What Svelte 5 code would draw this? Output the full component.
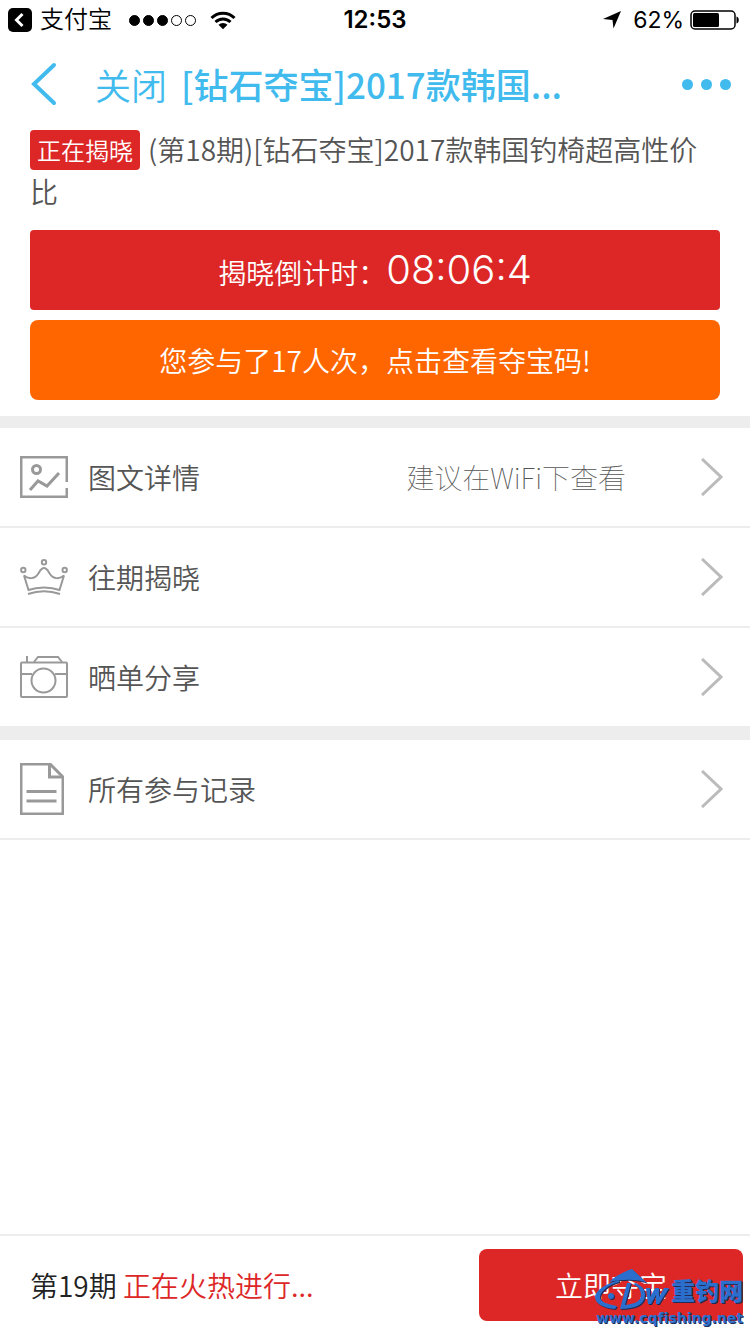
<script>
  let period = 18;
  let joined = 17;
  let countdown = "08:06:4";

  const groups = [
    [
      { icon: "picture", name: "图文详情", tip: "建议在WiFi下查看" },
      { icon: "crown", name: "往期揭晓" },
      { icon: "camera", name: "晒单分享" },
    ],
    [{ icon: "record", name: "所有参与记录" }],
  ];
  const signal = [true, true, true, false, false];
</script>

<div class="page">
  <div class="status">
    <div class="status-left">
      <svg width="24" height="24" viewBox="0 0 24 24">
        <rect width="24" height="24" rx="5" />
        <path d="M14.5 6 8.5 12l6 6" fill="none" stroke="#fff" stroke-width="3" />
      </svg>
      <span class="app-name">支付宝</span>
      <span class="signal">
        {#each signal as on}
          <i class:on></i>
        {/each}
      </span>
      <svg width="26" height="20" viewBox="0 0 26 20">
        <g fill="none" stroke="#000" stroke-width="3">
          <path d="M1.5 8a16.3 16.3 0 0 1 23 0" />
          <path d="M5.5 12a10.6 10.6 0 0 1 15 0" />
        </g>
        <path d="M8.5 14.8a6.4 6.4 0 0 1 9 0L13 19.3z" />
      </svg>
    </div>
    <b class="clock">12:53</b>
    <div class="status-right">
      <svg width="18" height="18" viewBox="0 0 18 18">
        <path d="M18 0 10.5 17.5 9.5 9 0 8z" />
      </svg>
      <span class="percent">62%</span>
      <svg width="49" height="20" viewBox="0 0 49 20">
        <rect x="1" y="1" width="44" height="18" rx="4" fill="none" stroke="#000" stroke-width="1.5" />
        <rect x="3" y="3" width="26" height="14" rx="1.5" />
        <path d="M46.5 6.5c3 .5 3 6.5 0 7z" />
      </svg>
    </div>
  </div>

  <header class="nav">
    <button class="back" aria-label="返回">
      <svg width="28" height="44" viewBox="0 0 28 44">
        <path d="M24 3 4 22l20 19" fill="none" stroke="#41bbee" stroke-width="4" stroke-linecap="round" />
      </svg>
    </button>
    <button class="close">关闭</button>
    <h1>[钻石夺宝]2017款韩国...</h1>
    <button class="more" aria-label="更多"><i></i><i></i><i></i></button>
  </header>

  <section class="goods">
    <p class="goods-title">
      <span class="tag">正在揭晓</span>({`第${period}期`})[钻石夺宝]2017款韩国钓椅超高性价比
    </p>
    <div class="countdown">揭晓倒计时：<span class="time">{countdown}</span></div>
    <button class="codes">您参与了{joined}人次，点击查看夺宝码!</button>
  </section>

  <main>
    {#each groups as group}
      <nav class="group">
        {#each group as item}
          <a class="row" href="#{item.icon}">
            <span class="icon">
              {#if item.icon === "picture"}
                <svg width="48" height="42" viewBox="0 0 48 42">
                  <path d="M47 26V1H1v40h46v-9" />
                  <circle cx="16.5" cy="13.5" r="4" />
                  <path d="m10 34 8-9 9 5 12-13" />
                </svg>
              {:else if item.icon === "crown"}
                <svg class="thin" width="48" height="36" viewBox="0 0 48 36">
                  <circle cx="24" cy="3.2" r="2.2" />
                  <circle cx="3.3" cy="11" r="2.2" />
                  <circle cx="44.7" cy="11" r="2.2" />
                  <path d="M8.5 31 4 16.5c4 4 11 3.500 14-1.500 2-3 3-6 6-6s4 3 6 6c3 5 10 5.500 14 1.500L39.500 31c-9-3.500-22-3.500-31 0z" />
                  <path d="M8 35c10-3.500 22-3.500 32 0" />
                </svg>
              {:else if item.icon === "camera"}
                <svg class="thin" width="48" height="42" viewBox="0 0 48 42">
                  <rect x="1" y="6.5" width="46" height="34.5" rx="1" />
                  <path d="M7 0v6M14 6l4-5h20l4 5M1 18h11M35 18h12" />
                  <circle cx="23.5" cy="24.5" r="12" />
                </svg>
              {:else}
                <svg width="44" height="52" viewBox="0 0 44 52">
                  <path d="M1 1h29l13 13v37H1z" />
                  <path d="M29.5 1v13H43M6.5 28.5h30M6.5 38h30" />
                </svg>
              {/if}
            </span>
            <span class="name">{item.name}</span>
            {#if item.tip}<span class="tip">{item.tip}</span>{/if}
            <svg class="arrow" width="22" height="38" viewBox="0 0 22 38">
              <path d="m1 1 19 18L1 37" />
            </svg>
          </a>
        {/each}
      </nav>
    {/each}
  </main>

  <footer>
    <p>第{period + 1}期 <span class="hot">正在火热进行...</span></p>
    <button class="buy">立即夺宝</button>
    <div class="watermark">
      <div class="brand">
        <svg width="76" height="44" viewBox="0 0 76 44">
          <path d="M14 14C22 7 30 3 37 1l15 14c-9-4-24-4-38-1z" />
          <path d="M24 12C10 16 0 23 0 29c0 7 9 11 20 12l2-3C12 36 5 34 5 29c1-6 8-12 19-15z" />
          <path d="M32 15h4l-6 22c10-1 16-4 16-10 0-5-3-9-8-11l3-1c6 3 9 7 9 12 0 9-9 14-25 14z" />
          <path d="M51 20h4l0 9 5-9h4l0 9 5-9h5L64 36h-3l0-9-5 9h-3z" />
          <circle cx="16" cy="28" r="3" />
        </svg>
        <span>重钓网</span>
      </div>
      <div class="site">www.cqfishing.net</div>
    </div>
  </footer>
</div>

<style>
  :global(body) {
    margin: 0;
    background: #fff;
  }
  .page {
    display: flex;
    flex-direction: column;
    min-height: 100vh;
    font-family: "Noto Sans CJK SC", sans-serif;
    font-size: 28px;
    font-weight: 350;
    color: #555;
  }
  button {
    border: 0;
    padding: 0;
    background: none;
    font: inherit;
    color: inherit;
  }
  p,
  h1 {
    margin: 0;
  }
  svg {
    display: block;
    flex-shrink: 0;
  }

  .status {
    display: grid;
    grid-template-columns: 1fr auto 1fr;
    align-items: center;
    height: 40px;
    padding: 0 11px;
    font-family: Inter, "Noto Sans CJK SC", sans-serif;
    font-size: 24px;
    line-height: 40px;
    color: #000;
  }
  .status-left,
  .status-right {
    display: flex;
    align-items: center;
  }
  .status-left {
    margin-left: -3px;
  }
  .status-right {
    justify-content: flex-end;
  }
  .app-name {
    margin: 0 17px 0 8px;
  }
  .signal {
    display: flex;
    gap: 3px;
    margin-right: 14px;
  }
  .signal i {
    box-sizing: border-box;
    width: 11px;
    height: 11px;
    border: 1px solid #000;
    border-radius: 50%;
  }
  .signal .on {
    background: #000;
  }
  .clock {
    font-weight: 600;
  }
  .percent {
    margin: 0 6px 0 12px;
    font-size: 23px;
    font-weight: 400;
  }

  .nav {
    display: flex;
    align-items: center;
    height: 88px;
    padding: 0 19px 0 30px;
    color: #41bbee;
  }
  .close {
    margin: 0 14px 0 37px;
    font-size: 36px;
  }
  h1 {
    flex: 1;
    font-size: 35px;
    font-weight: 500;
    line-height: 42px;
    white-space: nowrap;
  }
  .more {
    display: flex;
    gap: 8px;
  }
  .more i {
    width: 11px;
    height: 11px;
    border-radius: 50%;
    background: #41bbee;
  }

  .goods {
    padding: 0 30px 16px;
  }
  .goods-title {
    margin-bottom: 18px;
    line-height: 42px;
  }
  .tag {
    display: inline-block;
    margin: 2px 8px 0 0;
    padding: 0 7px;
    border-radius: 4px;
    background: #dd2727;
    font-size: 24px;
    line-height: 40px;
    vertical-align: top;
    color: #fff;
  }
  .countdown,
  .codes {
    height: 80px;
    border-radius: 4px;
    background: #dd2727;
    line-height: 80px;
    text-align: center;
    color: #fff;
  }
  .time {
    font-family: Inter, sans-serif;
    font-size: 40px;
    font-weight: 300;
  }
  .codes {
    display: block;
    width: 100%;
    margin-top: 10px;
    border-radius: 8px;
    background: #ff6600;
  }

  main {
    flex: 1;
  }
  .group {
    border-top: 12px solid #ededed;
  }
  .row {
    display: flex;
    align-items: center;
    height: 98px;
    padding: 0 27px 0 20px;
    border-bottom: 2px solid #ededed;
    color: #555;
    text-decoration: none;
  }
  .icon {
    width: 68px;
  }
  .icon svg {
    fill: none;
    stroke: #999;
    stroke-width: 3;
  }
  .icon .thin {
    stroke-width: 2;
  }
  .name {
    flex: 1;
  }
  .tip {
    margin-right: 75px;
    font-weight: 100;
  }
  .arrow {
    fill: none;
    stroke: #bbb;
    stroke-width: 3;
  }

  footer {
    position: relative;
    display: flex;
    align-items: center;
    justify-content: space-between;
    height: 98px;
    padding: 0 7px 0 30px;
    border-top: 2px solid #ededed;
    color: #222;
  }
  .hot {
    color: #dd2727;
  }
  .buy {
    width: 37%;
    height: 72px;
    border-radius: 8px;
    background: #dd2727;
    color: #fff;
  }
  .watermark {
    position: absolute;
    right: 7px;
    bottom: 10px;
    color: #2b6fce;
    text-shadow: 1px 1px 0 #222b55;
  }
  .brand {
    display: flex;
    align-items: center;
    justify-content: flex-end;
    font-size: 24px;
    font-weight: 900;
    line-height: 44px;
  }
  .brand svg {
    fill: #2b6fce;
    filter: drop-shadow(1px 1px 0 #222b55);
  }
  .site {
    font-family: "DejaVu Sans", sans-serif;
    font-size: 14px;
    font-weight: 700;
    font-variant-ligatures: none;
    line-height: 12px;
    text-align: right;
  }
</style>
